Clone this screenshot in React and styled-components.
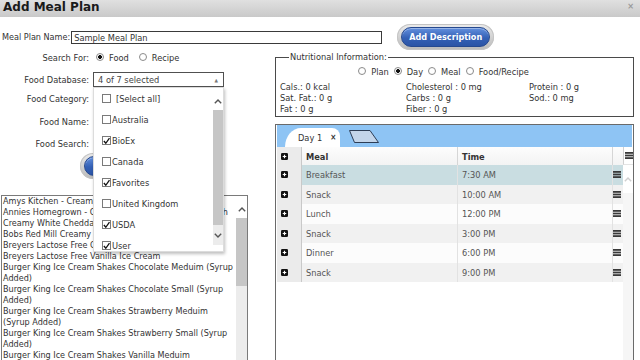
import React from "react";
import styled, { createGlobalStyle } from "styled-components";

const FONT = `"DejaVu Sans Condensed", "DejaVu Sans", "Liberation Sans", sans-serif`;

const GlobalStyle = createGlobalStyle`
  html, body { margin: 0; padding: 0; background: #fff; }
  body { width: 640px; height: 360px; overflow: hidden; }
  * { box-sizing: border-box; }
`;

const Page = styled.div`
  width: 640px;
  height: 360px;
  overflow: hidden;
  background: #fff;
  font-family: ${FONT};
  font-size: 9.2px;
  color: #333;
  display: flex;
  flex-direction: column;
`;

const TitleBar = styled.header`
  flex: none;
  height: 17px;
  display: flex;
  align-items: flex-start;
  justify-content: space-between;
  padding: 0 6px 0 3px;
  background: linear-gradient(#e0e0e0, #c9c9c9);
`;

const Title = styled.h1`
  margin: 0;
  font-family: "DejaVu Sans", sans-serif;
  font-size: 12px;
  line-height: 14px;
  font-weight: bold;
  color: #1a1a1a;
`;

const Close = styled.span`
  font-size: 9px;
  line-height: 12px;
  font-weight: bold;
  color: #9a9a9a;
`;

const Body = styled.main`
  flex: 1;
  min-height: 0;
  display: flex;
  flex-direction: column;
  padding: 0 6px 0 1px;
`;

const TopRow = styled.div`
  flex: none;
  display: flex;
  align-items: center;
  height: 26px;
  margin-top: 7px;
`;

const NameLabel = styled.label`
  padding-left: 1px;
  margin-right: 1px;
  white-space: nowrap;
  font-size: 9px;
`;

const TextInput = styled.input`
  width: ${(p) => p.$w}px;
  height: 13px;
  margin: 0;
  padding: 0 2px;
  border: 1px solid #3a3a3a;
  font-family: ${FONT};
  font-size: 9.2px;
  color: #333;
  outline: none;
`;

const PillRing = styled.div`
  margin-left: ${(p) => p.$ml || 0}px;
  width: ${(p) => p.$w}px;
  height: 26px;
  border-radius: 13px;
  padding: 3px 4px;
  background: linear-gradient(#ececec, #b9b9b9);
  box-shadow: inset 0 0 0 1px #c4c4c4;
`;

const PillButton = styled.button`
  width: 100%;
  height: 100%;
  border-radius: 10px;
  border: 1px solid #26498f;
  background: linear-gradient(#6390de, #3461b6 55%, #2b54a6);
  color: #fff;
  font-family: ${FONT};
  font-weight: bold;
  font-size: 9px;
  padding: 0;
  box-shadow: inset 0 1px 0 rgba(255, 255, 255, 0.35);
`;

const Columns = styled.div`
  flex: 1;
  min-height: 0;
  display: flex;
`;

const LeftCol = styled.section`
  width: 247px;
  flex: none;
  display: flex;
  flex-direction: column;
`;

const FormRow = styled.div`
  display: flex;
  align-items: center;
  height: ${(p) => p.$h}px;
  margin-top: ${(p) => p.$mt || 0}px;
  position: relative;
  z-index: ${(p) => (p.$top ? 5 : 1)};
`;

const RowLabel = styled.label`
  width: 88px;
  text-align: right;
  white-space: nowrap;
  margin-right: 4px;
`;

const RadioGroup = styled.div`
  display: flex;
  align-items: center;
  padding-left: ${(p) => p.$pl || 0}px;
`;

const Radio = styled.span`
  width: 8px;
  height: 8px;
  border-radius: 50%;
  border: 1px solid #8a8a8a;
  background: radial-gradient(circle, ${(p) => (p.$on ? "#111 0 1.6px, #fff 2.2px" : "#fff 0")}), #fff;
  margin-right: 5px;
  flex: none;
`;

const RadioText = styled.span`
  margin-right: ${(p) => p.$mr ?? 10}px;
  white-space: nowrap;
`;

const SelectWrap = styled.div`
  position: relative;
  width: 131px;
  height: 15px;
`;

const SelectBox = styled.div`
  height: 15px;
  border: 1px solid #505050;
  display: flex;
  align-items: center;
  justify-content: space-between;
  padding: 0 5px 0 4px;
  color: #444;
  background: #fff;
`;

const TinyArrow = styled.span`
  font-size: 5px;
  color: #777;
`;

const Dropdown = styled.div`
  position: absolute;
  top: 15px;
  left: 0;
  width: 131px;
  height: 165px;
  background: #fff;
  border: 1px solid #dcdcdc;
  box-shadow: 1px 2px 3px rgba(0, 0, 0, 0.25);
  display: flex;
  z-index: 20;
`;

const DropList = styled.ul`
  flex: 1;
  margin: 0;
  padding: 0;
  list-style: none;
`;

const DropItem = styled.li`
  height: 21px;
  display: flex;
  align-items: center;
  padding-left: 8px;
  color: #333;
`;

const Box = styled.span`
  width: 9px;
  height: 9px;
  border: 1px solid #7a7a7a;
  background: #fff;
  margin-right: ${(p) => (p.$wide ? 5 : 1)}px;
  display: flex;
  align-items: center;
  justify-content: center;
  flex: none;
`;

const ScrollBar = styled.div`
  width: ${(p) => p.$w}px;
  flex: none;
  display: flex;
  flex-direction: column;
`;

const ScrollBtn = styled.div`
  height: ${(p) => (p.$h ? `${p.$h}px` : "auto")};
  flex: ${(p) => (p.$grow ? 1 : "none")};
  display: flex;
  justify-content: center;
  align-items: ${(p) => p.$align || "center"};
  padding-top: ${(p) => p.$pt || 0}px;
`;

const Track = styled.div`
  height: ${(p) => (p.$h ? `${p.$h}px` : "auto")};
  flex: ${(p) => (p.$h ? "none" : 1)};
  background: #ececec;
  display: flex;
  flex-direction: column;
`;

const Thumb = styled.div`
  height: ${(p) => p.$h}px;
  background: #c6c6c6;
  flex: none;
`;

const ListBox = styled.div`
  margin-top: 18px;
  flex: 1;
  min-height: 0;
  border: 1px solid #7a7a7a;
  border-bottom: none;
  display: flex;
  overflow: hidden;
`;

const FoodList = styled.ul`
  flex: 1;
  margin: 0;
  padding: 0 0 0 1px;
  list-style: none;
  font-size: 9px;
  line-height: 11px;
  color: #333;
`;

const RightCol = styled.section`
  flex: 1;
  margin-left: 27px;
  display: flex;
  flex-direction: column;
  min-width: 0;
`;

const Fieldset = styled.fieldset`
  margin: 1px 0 0 0;
  padding: 0 4px 2px 4px;
  border: 1px solid #4a4a4a;
`;

const Legend = styled.legend`
  padding: 0 1px;
  margin-left: 9px;
  line-height: 12px;
`;

const RadioRow = styled.div`
  display: flex;
  justify-content: center;
  align-items: center;
  height: 12px;
  margin-top: 2px;
  padding-right: 22px;
`;

const NutriGrid = styled.div`
  display: grid;
  grid-template-columns: 126px 123px 1fr;
  grid-auto-rows: 11px;
  line-height: 11px;
  margin-top: 4px;
`;

const GridPanel = styled.div`
  margin-top: 7px;
  flex: 1;
  min-height: 0;
  border: 1px solid #6a6a6a;
  border-bottom: none;
  padding: 0 1px;
  display: flex;
  flex-direction: column;
`;

const TabStrip = styled.div`
  height: 22px;
  flex: none;
  background: #8ec4f4;
  display: flex;
  align-items: flex-end;
  padding-left: 8px;
`;

const Tab = styled.div`
  width: 55px;
  height: 19px;
  background: #fff;
  border-radius: 16px 8px 0 0 / 19px 8px 0 0;
  display: flex;
  align-items: center;
  padding: 0 0 0 13px;
  color: #333;
`;

const TabClose = styled.span`
  margin-left: 8px;
  font-weight: bold;
  font-size: 8px;
  color: #333;
`;

const NewTab = styled.svg`
  align-self: flex-start;
  margin: 5px 0 0 9px;
`;

const GridBody = styled.div`
  flex: 1;
  display: flex;
  min-height: 0;
`;

const DataArea = styled.div`
  flex: 1;
  display: flex;
  flex-direction: column;
`;

const GridRow = styled.div`
  display: grid;
  grid-template-columns: 25px 156px 155px 10px;
  height: ${(p) => (p.$head ? 18 : 19.5)}px;
  background: ${(p) => p.$bg};
  font-weight: ${(p) => (p.$head ? "bold" : "normal")};
  color: ${(p) => (p.$head ? "#333" : "#555")};
`;

const PlusCell = styled.div`
  background: #ebebeb;
  border-right: 1px solid #c9c9c9;
  display: flex;
  align-items: center;
  padding-left: 4px;
`;

const Cell = styled.div`
  display: flex;
  align-items: center;
  padding-left: 4px;
  border-right: 1px solid ${(p) => (p.$head ? "#d6d6d6" : "#e2e2e2")};
`;

const MenuCell = styled.div`
  display: flex;
  align-items: center;
  justify-content: flex-start;
`;

const ScrollCol = styled.div`
  width: 10px;
  flex: none;
  display: flex;
  flex-direction: column;
  background: #f6f6f6;
`;

const ScrollHead = styled.div`
  height: 18px;
  background: #fff;
  border-left: 1px solid #d0d0d0;
  border-bottom: 1px solid #e4e4e4;
  display: flex;
  align-items: center;
  justify-content: center;
`;

const ScrollUp = styled.div`
  height: 28px;
  background: #fff;
  display: flex;
  align-items: center;
  justify-content: center;
`;

const Chevron = ({ up = true, color = "#555" }) => (
  <svg width="8" height="5" viewBox="0 0 8 5">
    <polyline
      points={up ? "0.8,4.2 4,1 7.2,4.2" : "0.8,0.8 4,4 7.2,0.8"}
      fill="none"
      stroke={color}
      strokeWidth="1.4"
    />
  </svg>
);

const Check = () => (
  <svg width="8" height="8" viewBox="0 0 8 8">
    <polyline points="1,4 3.2,6.6 7.4,0.8" fill="none" stroke="#111" strokeWidth="1.5" />
  </svg>
);

const PlusIcon = () => (
  <svg width="7" height="7" viewBox="0 0 7 7">
    <rect x="0" y="0" width="7" height="7" rx="1.3" fill="#111" />
    <path d="M3.5 1.7v3.6M1.7 3.5h3.6" stroke="#fff" strokeWidth="1.2" />
  </svg>
);

const MenuIcon = () => (
  <svg width="8" height="7" viewBox="0 0 8 7">
    <rect x="0" y="0" width="8" height="1.8" fill="#3a3a3a" />
    <rect x="0" y="2.6" width="8" height="1.8" fill="#3a3a3a" />
    <rect x="0" y="5.2" width="8" height="1.8" fill="#3a3a3a" />
  </svg>
);

const dbItems = [
  { label: "[Select all]", all: true },
  { label: "Australia" },
  { label: "BioEx", checked: true },
  { label: "Canada" },
  { label: "Favorites", checked: true },
  { label: "United Kingdom" },
  { label: "USDA", checked: true },
  { label: "User", checked: true },
];

const foods = [
  "Amys Kitchen - Cream of Tomato Soup",
  "Annies Homegrown - Organic Mac & Cheese Shells with Creamy White Cheddar",
  "Bobs Red Mill Creamy Buckwheat Cereal",
  "Breyers Lactose Free Chocolate Ice Cream",
  "Breyers Lactose Free Vanilla Ice Cream",
  "Burger King Ice Cream Shakes Chocolate Meduim (Syrup Added)",
  "Burger King Ice Cream Shakes Chocolate Small (Syrup Added)",
  "Burger King Ice Cream Shakes Strawberry Meduim (Syrup Added)",
  "Burger King Ice Cream Shakes Strawberry Small (Syrup Added)",
  "Burger King Ice Cream Shakes Vanilla Meduim",
  "Burger King Ice Cream Shakes Vanilla Small",
];

const meals = [
  ["Breakfast", "7:30 AM"],
  ["Snack", "10:00 AM"],
  ["Lunch", "12:00 PM"],
  ["Snack", "3:00 PM"],
  ["Dinner", "6:00 PM"],
  ["Snack", "9:00 PM"],
];

const nutrients = [
  ["Cals.: 0 kcal", "Cholesterol : 0 mg", "Protein : 0 g"],
  ["Sat. Fat.: 0 g", "Carbs : 0 g", "Sod.: 0 mg"],
  ["Fat : 0 g", "Fiber : 0 g", ""],
];

const rowBg = (i) => (i === 0 ? "#c9dde1" : i % 2 === 1 ? "#f1f1f1" : "#fcfcfc");

export default function App() {
  return (
    <Page>
      <GlobalStyle />
      <TitleBar>
        <Title>Add Meal Plan</Title>
        <Close>×</Close>
      </TitleBar>
      <Body>
        <TopRow>
          <NameLabel>Meal Plan Name:</NameLabel>
          <TextInput $w={311} readOnly value="Sample Meal Plan" />
          <PillRing $ml={15} $w={97}>
            <PillButton>Add Description</PillButton>
          </PillRing>
        </TopRow>
        <Columns>
          <LeftCol>
            <FormRow $h={14}>
              <RowLabel>Search For:</RowLabel>
              <RadioGroup $pl={3}>
                <Radio $on />
                <RadioText>Food</RadioText>
                <Radio />
                <RadioText>Recipe</RadioText>
              </RadioGroup>
            </FormRow>
            <FormRow $h={15} $mt={8} $top>
              <RowLabel>Food Database:</RowLabel>
              <SelectWrap>
                <SelectBox>
                  <span>4 of 7 selected</span>
                  <TinyArrow>▲</TinyArrow>
                </SelectBox>
                <Dropdown>
                  <DropList>
                    {dbItems.map((it) => (
                      <DropItem key={it.label}>
                        <Box $wide={it.all}>{it.checked && <Check />}</Box>
                        {it.label}
                      </DropItem>
                    ))}
                  </DropList>
                  <ScrollBar $w={10}>
                    <ScrollBtn $h={22} $align="flex-start" $pt={11}>
                      <Chevron up />
                    </ScrollBtn>
                    <Track $h={135}>
                      <Thumb $h={115} />
                      <ScrollBtn $grow>
                        <Chevron up={false} />
                      </ScrollBtn>
                    </Track>
                  </ScrollBar>
                </Dropdown>
              </SelectWrap>
            </FormRow>
            <FormRow $h={16} $mt={3}>
              <RowLabel>Food Category:</RowLabel>
            </FormRow>
            <FormRow $h={16} $mt={7}>
              <RowLabel>Food Name:</RowLabel>
            </FormRow>
            <FormRow $h={16} $mt={6}>
              <RowLabel>Food Search:</RowLabel>
            </FormRow>
            <FormRow $h={22} $mt={4}>
              <PillRing $ml={79} $w={90}>
                <PillButton>Search</PillButton>
              </PillRing>
            </FormRow>
            <ListBox>
              <FoodList>
                {foods.map((f) => (
                  <li key={f}>{f}</li>
                ))}
              </FoodList>
              <ScrollBar $w={11}>
                <ScrollBtn $h={22} $align="flex-start" $pt={11}>
                  <Chevron up />
                </ScrollBtn>
                <Track>
                  <Thumb $h={68} />
                </Track>
              </ScrollBar>
            </ListBox>
          </LeftCol>
          <RightCol>
            <Fieldset>
              <Legend>Nutritional Information:</Legend>
              <RadioRow>
                <Radio />
                <RadioText $mr={5}>Plan</RadioText>
                <Radio $on />
                <RadioText $mr={5}>Day</RadioText>
                <Radio />
                <RadioText $mr={5}>Meal</RadioText>
                <Radio />
                <RadioText $mr={0}>Food/Recipe</RadioText>
              </RadioRow>
              <NutriGrid>
                {nutrients.flat().map((n, i) => (
                  <span key={i}>{n}</span>
                ))}
              </NutriGrid>
            </Fieldset>
            <GridPanel>
              <TabStrip>
                <Tab>
                  Day 1<TabClose>×</TabClose>
                </Tab>
                <NewTab width="30" height="13" viewBox="0 0 30 13">
                  <polygon points="0.5,0.5 21,0.5 29.5,12.5 5.5,12.5" fill="#c3d5ea" stroke="#2d3d55" strokeWidth="1" />
                </NewTab>
              </TabStrip>
              <GridBody>
                <DataArea>
                  <GridRow $head $bg="linear-gradient(#fdfdfd,#f3f3f3)">
                    <PlusCell>
                      <PlusIcon />
                    </PlusCell>
                    <Cell $head>Meal</Cell>
                    <Cell $head>Time</Cell>
                    <MenuCell />
                  </GridRow>
                  {meals.map(([m, t], i) => (
                    <GridRow key={i} $bg={rowBg(i)}>
                      <PlusCell>
                        <PlusIcon />
                      </PlusCell>
                      <Cell>{m}</Cell>
                      <Cell>{t}</Cell>
                      <MenuCell>
                        <MenuIcon />
                      </MenuCell>
                    </GridRow>
                  ))}
                </DataArea>
                <ScrollCol>
                  <ScrollHead>
                    <MenuIcon />
                  </ScrollHead>
                  <ScrollUp>
                    <Chevron up color="#cfcfcf" />
                  </ScrollUp>
                </ScrollCol>
              </GridBody>
            </GridPanel>
          </RightCol>
        </Columns>
      </Body>
    </Page>
  );
}
